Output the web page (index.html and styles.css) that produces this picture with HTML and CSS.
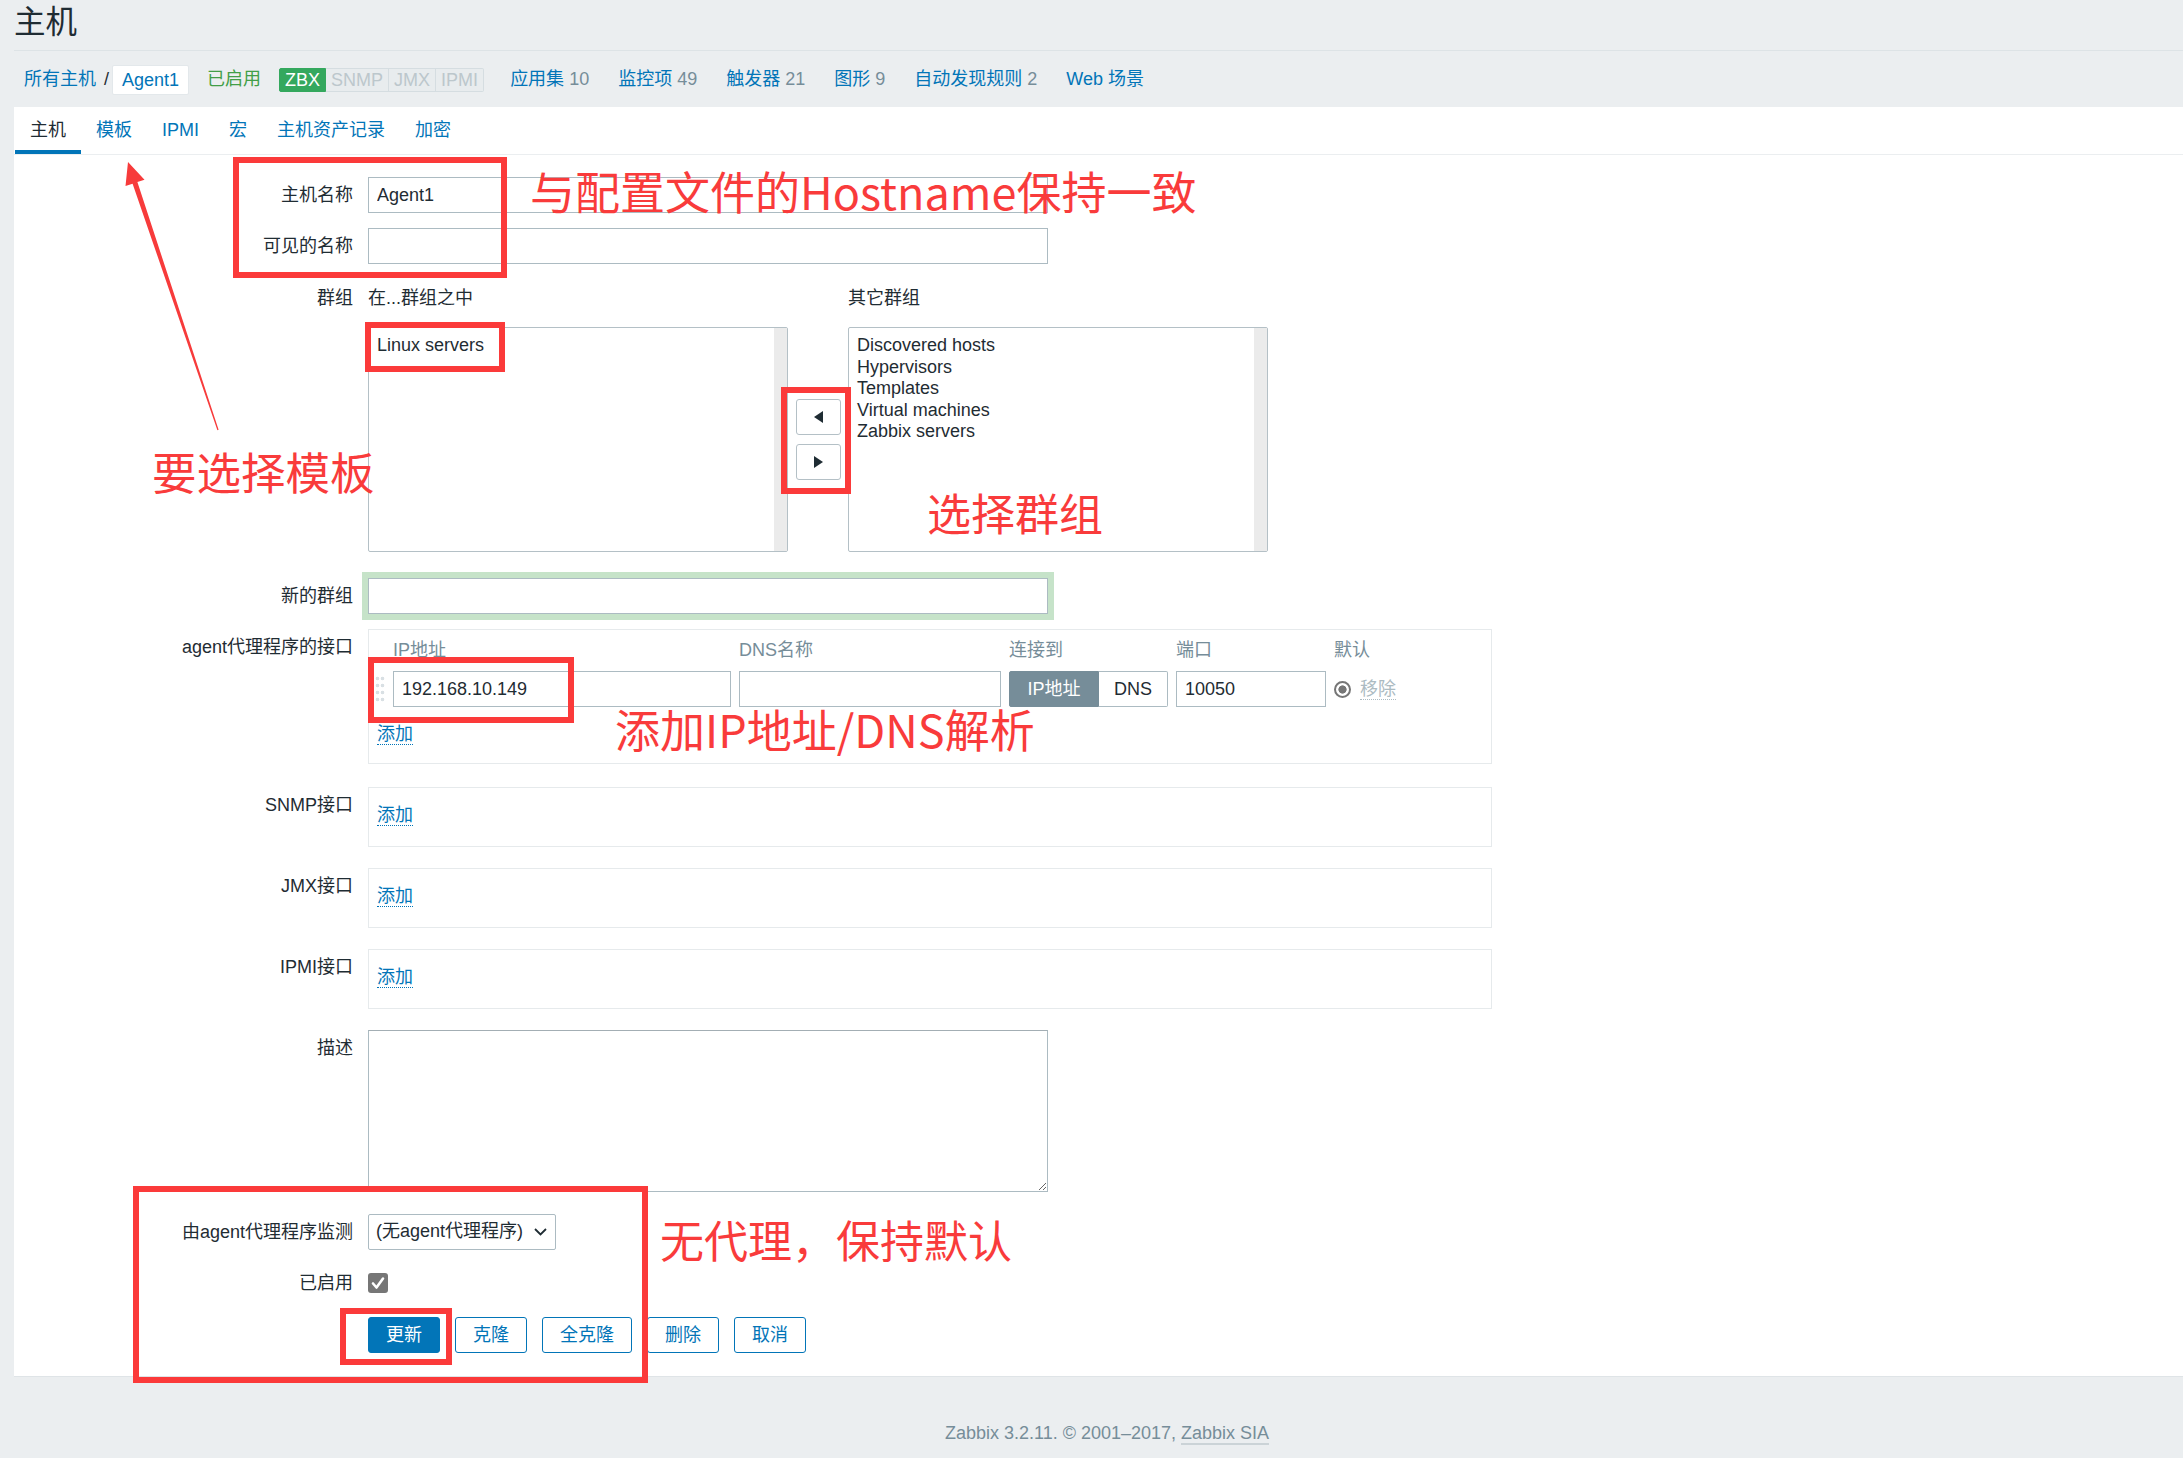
FILE: index.html
```html
<!DOCTYPE html>
<html lang="zh-CN">
<head>
<meta charset="utf-8">
<title>主机</title>
<link rel="stylesheet" href="styles.css">
</head>
<body>
<header class="page-header">
  <h1 class="title">主机</h1>
</header>
<nav class="crumbs">
  <a class="link">所有主机</a><span class="sep">/</span><span class="crumb-current">Agent1</span>
  <span class="status-on">已启用</span>
  <span class="badges"><span class="badge badge-on">ZBX</span><span class="badge">SNMP</span><span class="badge">JMX</span><span class="badge">IPMI</span></span>
  <span class="nav-item first"><a class="link">应用集</a> <span class="count">10</span></span>
  <span class="nav-item"><a class="link">监控项</a> <span class="count">49</span></span>
  <span class="nav-item"><a class="link">触发器</a> <span class="count">21</span></span>
  <span class="nav-item"><a class="link">图形</a> <span class="count">9</span></span>
  <span class="nav-item"><a class="link">自动发现规则</a> <span class="count">2</span></span>
  <span class="nav-item"><a class="link">Web 场景</a></span>
</nav>
<main class="content">
  <ul class="tabs">
    <li class="tab active">主机</li>
    <li class="tab">模板</li>
    <li class="tab">IPMI</li>
    <li class="tab">宏</li>
    <li class="tab">主机资产记录</li>
    <li class="tab">加密</li>
  </ul>
  <form class="form">
    <div class="row r-first">
      <label class="label">主机名称</label>
      <div class="field"><input class="input w-wide" value="Agent1"></div>
    </div>
    <div class="row">
      <label class="label">可见的名称</label>
      <div class="field"><input class="input w-wide" value=""></div>
    </div>
    <div class="row r-group">
      <div class="label">群组</div>
      <div class="field picker">
        <div class="gp-head">在...群组之中</div>
        <div></div>
        <div class="gp-head">其它群组</div>
        <div class="listbox"><div class="opts"><div>Linux servers</div></div><span class="strip"></span></div>
        <div class="gp-buttons">
          <button type="button" class="mv-btn"><svg width="9" height="12" viewBox="0 0 9 12"><polygon points="9,0 9,12 0,6" fill="#1f2c33"/></svg></button>
          <button type="button" class="mv-btn"><svg width="9" height="12" viewBox="0 0 9 12"><polygon points="0,0 0,12 9,6" fill="#1f2c33"/></svg></button>
        </div>
        <div class="listbox"><div class="opts"><div>Discovered hosts</div><div>Hypervisors</div><div>Templates</div><div>Virtual machines</div><div>Zabbix servers</div></div><span class="strip"></span></div>
      </div>
    </div>
    <div class="row r-newgroup">
      <label class="label">新的群组</label>
      <div class="field"><input class="input w-wide glow" value=""></div>
    </div>
    <div class="row">
      <div class="label lbl-iface">agent代理程序的接口</div>
      <div class="field">
        <div class="iface">
          <div class="iface-grid">
            <span></span>
            <span class="ih">IP地址</span>
            <span class="ih">DNS名称</span>
            <span class="ih">连接到</span>
            <span class="ih">端口</span>
            <span class="ih">默认</span>
            <span class="drag"></span>
            <input class="input" value="192.168.10.149">
            <input class="input" value="">
            <div class="toggle"><span class="tg on">IP地址</span><span class="tg">DNS</span></div>
            <input class="input" value="10050">
            <div class="def"><span class="radio"></span><span class="remove">移除</span></div>
          </div>
          <div class="add-row"><a class="add-link">添加</a></div>
        </div>
      </div>
    </div>
    <div class="row r-iface">
      <div class="label">SNMP接口</div>
      <div class="field"><div class="iface-empty"><a class="add-link">添加</a></div></div>
    </div>
    <div class="row r-iface2">
      <div class="label">JMX接口</div>
      <div class="field"><div class="iface-empty"><a class="add-link">添加</a></div></div>
    </div>
    <div class="row r-iface2">
      <div class="label">IPMI接口</div>
      <div class="field"><div class="iface-empty"><a class="add-link">添加</a></div></div>
    </div>
    <div class="row r-iface2">
      <label class="label">描述</label>
      <div class="field"><textarea class="textarea"></textarea></div>
    </div>
    <div class="row r-proxy">
      <label class="label">由agent代理程序监测</label>
      <div class="field"><div class="select"><span>(无agent代理程序)</span><svg width="13" height="8" viewBox="0 0 13 8"><polyline points="1,1 6.5,6.5 12,1" fill="none" stroke="#1f2c33" stroke-width="1.8"/></svg></div></div>
    </div>
    <div class="row">
      <label class="label">已启用</label>
      <div class="field field-check"><span class="check"><svg width="20" height="20" viewBox="0 0 20 20"><polyline points="5,10.5 8.5,14.5 15,5.5" fill="none" stroke="#fff" stroke-width="2.6" stroke-linecap="round" stroke-linejoin="round"/></svg></span></div>
    </div>
    <div class="row r-buttons">
      <div></div>
      <div class="field buttons">
        <button type="button" class="btn btn-primary">更新</button>
        <button type="button" class="btn">克隆</button>
        <button type="button" class="btn">全克隆</button>
        <button type="button" class="btn">删除</button>
        <button type="button" class="btn">取消</button>
      </div>
    </div>
  </form>
</main>
<footer class="footer">Zabbix 3.2.11. © 2001–2017, <a class="footer-link">Zabbix SIA</a></footer>

<div class="notes" aria-hidden="true">
  <div class="rbox rb-name"></div>
  <div class="rbox rb-linux"></div>
  <div class="rbox rb-move"></div>
  <div class="rbox rb-ip"></div>
  <div class="rbox rb-bottom"></div>
  <div class="rbox rb-update"></div>
  <div class="note n-host">与配置文件的Hostname保持一致</div>
  <div class="note n-tpl">要选择模板</div>
  <div class="note n-grp">选择群组</div>
  <div class="note n-ip">添加IP地址/DNS解析</div>
  <div class="note n-proxy">无代理，保持默认</div>
  <svg class="arrow" width="240" height="440" viewBox="0 0 240 440">
    <polygon points="128,162 144.5,179.7 137.4,182.1 218.6,429.8 217.4,430.2 132.6,183.7 125.5,186.1" fill="#f73b3b"/>
  </svg>
</div>
</body>
</html>
```

FILE: styles.css
```css
* { box-sizing: border-box; }
html, body { margin: 0; padding: 0; }
body {
  position: relative;
  background: #ebeef0;
  color: #1f2c33;
  font-family: "Liberation Sans", Arial, "Noto Sans CJK SC", sans-serif;
  font-size: 18px;
  line-height: 1.2;
}
a { cursor: pointer; }

.page-header {
  margin-left: 14px;
  height: 51px;
  border-bottom: 1px solid #dde3e6;
}
.title {
  margin: 0;
  font-size: 31.5px;
  font-weight: normal;
  line-height: 44px;
  color: #1f2c33;
}

.crumbs {
  display: flex;
  align-items: center;
  height: 56px;
  padding-top: 2px;
  padding-left: 24px;
  white-space: nowrap;
}
.link { color: #0275b8; text-decoration: none; }
.sep { margin: 0 3px 0 8px; color: #1f2c33; }
.crumb-current {
  background: #fff;
  color: #0275b8;
  height: 30px;
  line-height: 28px;
  padding: 0 9px;
  border: 1px solid #e3e8eb;
  border-radius: 2px;
}
.status-on { margin-left: 18px; color: #429e47; }
.badges { display: flex; margin-left: 18px; }
.badge {
  height: 24px;
  line-height: 22px;
  padding: 0 5px;
  border: 1px solid #d5dde1;
  border-left-width: 0;
  background: #e8ecee;
  color: #bcc7cc;
}
.badge:last-child { border-radius: 0 2px 2px 0; }
.badge-on {
  background: #34a85e;
  border: 1px solid #34a85e;
  color: #fff;
  border-radius: 2px 0 0 2px;
}
.nav-item { margin-left: 29px; }
.nav-item.first { margin-left: 26px; }
.count { color: #768d99; }

.content {
  margin-left: 14px;
  background: #fff;
  border-bottom: 1px solid #dfe4e7;
  padding-bottom: 23px;
}
.tabs {
  display: flex;
  list-style: none;
  margin: 0;
  padding: 0 0 0 1px;
  height: 48px;
  border-bottom: 1px solid #ebeef0;
}
.tab {
  height: 47px;
  padding: 3px 15px 0;
  line-height: 40px;
  border-bottom: 4px solid transparent;
  color: #0275b8;
}
.tab.active { color: #1f2c33; border-bottom-color: #0275b8; }

.form { padding-top: 22px; }
.row {
  display: grid;
  grid-template-columns: 339px 1fr;
  column-gap: 15px;
  margin-top: 15px;
}
.r-first { margin-top: 0; }
.r-group { margin-top: 16px; }
.r-newgroup { margin-top: 26px; }
.r-iface { margin-top: 23px; }
.r-iface2 { margin-top: 21px; }
.r-proxy { margin-top: 22px; }
.r-buttons { margin-top: 16px; }
.label {
  text-align: right;
  line-height: 36px;
  white-space: nowrap;
  color: #1f2c33;
}
.lbl-iface { line-height: 37px; }

.input {
  display: block;
  height: 36px;
  padding: 0 8px;
  border: 1px solid #acbbc2;
  border-radius: 0;
  background: #fff;
  color: #1f2c33;
  font: inherit;
  outline: none;
}
.w-wide { width: 680px; }
.glow { box-shadow: 0 0 0 6px #c6e3c9; }

.picker {
  display: grid;
  grid-template-columns: 420px 60px 420px;
  grid-template-rows: 36px 225px;
  row-gap: 11px;
}
.gp-head { line-height: 36px; }
.listbox {
  display: flex;
  border: 1px solid #b4c0c6;
  border-radius: 2px;
  background: #fff;
}
.opts {
  flex: 1;
  padding: 7px 8px;
  line-height: 21.6px;
  white-space: nowrap;
}
.strip { width: 13px; background: #ebebeb; }
.gp-buttons {
  display: flex;
  flex-direction: column;
  justify-content: center;
  gap: 9px;
  padding-left: 8px;
}
.mv-btn {
  display: flex;
  align-items: center;
  justify-content: center;
  width: 45px;
  height: 36px;
  padding: 0;
  background: #fff;
  border: 1px solid #b4c0c6;
  border-radius: 3px;
}

.iface {
  width: 1124px;
  border: 1px solid #e6eaec;
  padding: 7px 0 17px 6px;
}
.iface-grid {
  display: grid;
  grid-template-columns: 10px 338px 262px 159px 150px auto;
  grid-template-rows: 26px 36px;
  column-gap: 8px;
  row-gap: 8px;
}
.iface-grid .input { width: 100%; }
.ih { line-height: 26px; color: #768d99; white-space: nowrap; }
.drag {
  align-self: center;
  height: 28px;
  background-image: radial-gradient(circle, #d9e0e4 1.6px, transparent 2.1px);
  background-size: 5px 7px;
}
.toggle { display: flex; height: 36px; }
.tg {
  height: 36px;
  line-height: 34px;
  text-align: center;
  border: 1px solid #acbbc2;
  border-left-width: 0;
  width: 69px;
  color: #1f2c33;
  border-radius: 0 2px 2px 0;
}
.tg.on {
  width: 90px;
  background: #768d99;
  border-color: #768d99;
  border-left-width: 1px;
  color: #fff;
  border-radius: 2px 0 0 2px;
}
.def { display: flex; align-items: center; gap: 9px; height: 36px; }
.radio {
  width: 17px;
  height: 17px;
  border-radius: 50%;
  border: 2px solid #767676;
  background: radial-gradient(circle, #767676 0 3.8px, #fff 4.4px);
}
.remove {
  color: #acbbc2;
  line-height: 20px;
  border-bottom: 1px dotted #acbbc2;
}
.add-row { margin-top: 17px; padding-left: 2px; }
.add-link {
  display: inline-block;
  color: #0275b8;
  line-height: 20px;
  border-bottom: 1px dotted #0275b8;
}
.iface-empty {
  width: 1124px;
  height: 60px;
  border: 1px solid #e6eaec;
  padding: 17px 0 0 8px;
}

.textarea {
  display: block;
  width: 680px;
  height: 162px;
  border: 1px solid #acbbc2;
  border-top-color: #a3aeb4;
  padding: 6px 8px;
  font: inherit;
  resize: both;
  outline: none;
}

.select {
  display: flex;
  align-items: center;
  justify-content: space-between;
  width: 188px;
  height: 36px;
  padding: 0 8px 0 7px;
  border: 1px solid #acbbc2;
  border-radius: 2px;
  white-space: nowrap;
}
.field-check { display: flex; align-items: center; height: 36px; }
.check {
  display: block;
  width: 20px;
  height: 20px;
  background: #767676;
  border-radius: 3px;
}
.check svg { display: block; }

.buttons { display: flex; gap: 15px; }
.btn {
  height: 36px;
  padding: 0 17px;
  border: 1px solid #0275b8;
  border-radius: 3px;
  background: #fff;
  color: #0275b8;
  font: inherit;
  line-height: 34px;
}
.btn-primary { background: #0275b8; color: #fff; }

.footer {
  padding-top: 45px;
  padding-left: 31px;
  padding-bottom: 12px;
  text-align: center;
  line-height: 22px;
  color: #768d99;
}
.footer-link {
  color: #768d99;
  text-decoration: none;
  border-bottom: 2px solid #cbd3d7;
}

/* annotation overlay */
.notes { position: absolute; left: 0; top: 0; width: 0; height: 0; pointer-events: none; }
.rbox { position: absolute; border: 6px solid #fb3a3a; }
.rb-name { left: 233px; top: 157px; width: 274px; height: 121px; }
.rb-linux { left: 365px; top: 322px; width: 140px; height: 50px; }
.rb-move { left: 781px; top: 387px; width: 70px; height: 107px; }
.rb-ip { left: 368px; top: 657px; width: 206px; height: 66px; }
.rb-bottom { left: 133px; top: 1186px; width: 515px; height: 197px; }
.rb-update { left: 340px; top: 1308px; width: 112px; height: 57px; }
.note {
  position: absolute;
  font-family: "Noto Sans CJK SC", "Liberation Sans", sans-serif;
  font-size: 44px;
  line-height: 1;
  color: #f93b3b;
  white-space: nowrap;
}
.n-host { left: 530px; top: 168px; font-size: 45px; }
.n-tpl { left: 152px; top: 449px; font-size: 44.5px; }
.n-grp { left: 927px; top: 490px; }
.n-ip { left: 615px; top: 706px; font-size: 45px; }
.n-proxy { left: 660px; top: 1217px; }
.arrow { position: absolute; left: 0; top: 0; }
```
